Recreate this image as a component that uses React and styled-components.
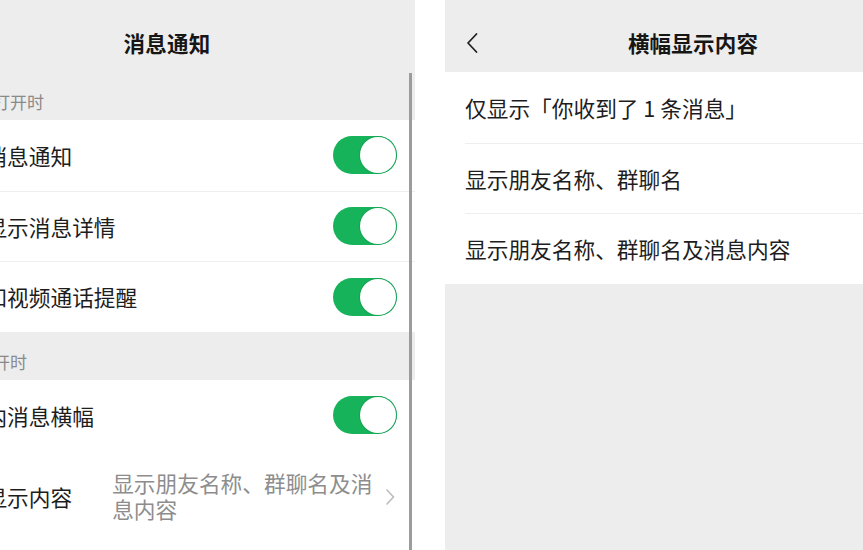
import React from "react";
import styled, { createGlobalStyle } from "styled-components";

const GlobalStyle = createGlobalStyle`
  html, body {
    margin: 0;
    padding: 0;
    background: #ffffff;
    overflow: hidden;
  }
  body {
    font-family: "Noto Sans CJK SC", "Noto Sans", sans-serif;
    -webkit-font-smoothing: antialiased;
  }
`;

// two phone screens side by side, the first one half off the left edge
const Stage = styled.div`
  display: flex;
  gap: 30px;
  height: 550px;
  margin-left: -81px;
`;

const Phone = styled.div`
  --inset: ${(p) => p.$inset}px;
  position: relative;
  flex-shrink: 0;
  width: 496px;
  height: 550px;
  display: flex;
  flex-direction: column;
  background: #ededed;
  overflow: hidden;

  & > * {
    flex-shrink: 0;
  }
`;

const NavBar = styled.div`
  display: grid;
  grid-template-columns: 1fr auto 1fr;
  align-items: center;
  height: 72px;
  padding: 13px 20px 0;
  box-sizing: border-box;
`;

const Title = styled.div`
  font-size: 21.5px;
  font-weight: 600;
  color: #161616;
  letter-spacing: 0.2px;
`;

const Back = styled.div`
  display: flex;
  align-items: center;
`;

const SectionLabel = styled.div`
  height: 48px;
  box-sizing: border-box;
  padding: 0 var(--inset) 5px;
  display: flex;
  align-items: flex-end;
  font-size: 17px;
  line-height: 26px;
  color: #8a8a8a;
  white-space: nowrap;
`;

const Group = styled.div`
  background: #ffffff;
`;

const Row = styled.div`
  position: relative;
  display: flex;
  align-items: center;
  min-height: ${(p) => (p.$tall ? 104 : 70.7)}px;
  box-sizing: border-box;
  padding: 0 18px 0 var(--inset);

  & + &::before {
    content: "";
    position: absolute;
    top: 0;
    left: var(--inset);
    right: 0;
    height: 1px;
    background: #efefef;
  }
`;

const Label = styled.div`
  flex-shrink: 0;
  font-size: 21.7px;
  color: #1d1d1d;
  white-space: nowrap;
  margin-top: ${(p) => (p.$lift ? -13 : 0)}px;
`;

const Value = styled.div`
  flex: 1;
  margin-left: 40px;
  margin-top: -13px;
  font-size: 21.7px;
  line-height: 26px;
  color: #8d8d8d;
`;

const Chevron = styled.div`
  margin-left: 6px;
  margin-right: 2px;
  margin-top: -12px;
  display: flex;
`;

const Switch = styled.div`
  position: relative;
  margin-left: auto;
  width: 64px;
  height: 38px;
  border-radius: 19px;
  background: #17b35a;

  &::after {
    content: "";
    position: absolute;
    top: 1px;
    right: 1px;
    width: 36px;
    height: 36px;
    border-radius: 50%;
    background: #ffffff;
    box-shadow: 0 0 0 1px rgba(20, 150, 80, 0.6);
  }
`;

const ScrollThumb = styled.div`
  position: absolute;
  top: 73px;
  right: 3px;
  width: 3px;
  height: 600px;
  background: #9c9c9c;
`;

const BackArrow = () => (
  <svg width="14" height="22" viewBox="0 0 14 22">
    <polyline
      points="11.5,2 3,11 11.5,20"
      fill="none"
      stroke="#222"
      strokeWidth="1.8"
      strokeLinejoin="round"
      strokeLinecap="round"
    />
  </svg>
);

const ChevronIcon = () => (
  <svg width="10" height="18" viewBox="0 0 10 18">
    <polyline
      points="2,2 8.5,9 2,16"
      fill="none"
      stroke="#bcbcbc"
      strokeWidth="1.6"
      strokeLinejoin="round"
      strokeLinecap="round"
    />
  </svg>
);

const closedToggles = ["接收消息通知", "通知显示消息详情", "语音和视频通话提醒"];

const bannerOptions = [
  "仅显示「你收到了 1 条消息」",
  "显示朋友名称、群聊名",
  "显示朋友名称、群聊名及消息内容",
];

function App() {
  return (
    <>
      <GlobalStyle />
      <Stage>
        <Phone $inset={23}>
          <NavBar>
            <Back>
              <BackArrow />
            </Back>
            <Title>消息通知</Title>
          </NavBar>

          <SectionLabel>微信未打开时</SectionLabel>
          <Group>
            {closedToggles.map((name) => (
              <Row key={name}>
                <Label>{name}</Label>
                <Switch />
              </Row>
            ))}
          </Group>

          <SectionLabel>微信打开时</SectionLabel>
          <Group>
            <Row>
              <Label>应用内消息横幅</Label>
              <Switch />
            </Row>
            <Row $tall>
              <Label $lift>横幅显示内容</Label>
              <Value>显示朋友名称、群聊名及消息内容</Value>
              <Chevron>
                <ChevronIcon />
              </Chevron>
            </Row>
          </Group>

          <ScrollThumb />
        </Phone>

        <Phone $inset={20}>
          <NavBar>
            <Back>
              <BackArrow />
            </Back>
            <Title>横幅显示内容</Title>
          </NavBar>
          <Group>
            {bannerOptions.map((text) => (
              <Row key={text}>
                <Label>{text}</Label>
              </Row>
            ))}
          </Group>
        </Phone>
      </Stage>
    </>
  );
}

export default App;
